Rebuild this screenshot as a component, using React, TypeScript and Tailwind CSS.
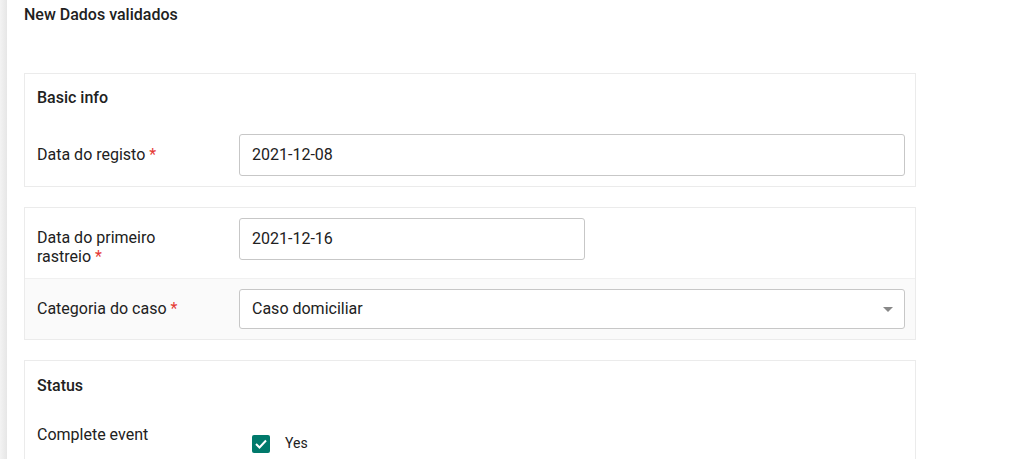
export default function App() {
  return (
    <div
      className="flex h-[459px] w-[1036px] overflow-hidden bg-white text-[#212121]"
      style={{ fontFamily: "Roboto, 'Liberation Sans', sans-serif" }}
    >
      <div className="w-[7px] shrink-0 bg-gradient-to-r from-[#f3f3f3] to-[#e6e6e6]" />
      <div className="flex-1 pl-[17px]">
        <h1 className="pt-[5px] text-[16px] font-medium leading-[20px]">New Dados validados</h1>

        <section className="mt-[48px] w-[892px] border border-[#ebebeb]">
          <h2 className="px-[12px] pt-[14px] text-[16px] font-medium leading-[20px]">Basic info</h2>
          <div className="flex items-center pl-[12px] pb-[10px] pt-[26px]">
            <label className="w-[202px] text-[16px]">
              Data do registo <span className="text-[#e53935]">*</span>
            </label>
            <div className="flex h-[42px] w-[666px] items-center rounded-[3px] border border-[#c7c7c7] px-[12px] text-[16px]">
              2021-12-08
            </div>
          </div>
        </section>

        <section className="mt-[20px] w-[892px] border border-[#ebebeb]">
          <div className="flex items-start border-b border-[#f0f0f0] px-[12px] pb-[12px] pt-[10px]">
            <label className="w-[202px] pt-[10px] text-[16px] leading-[19px]">
              Data do primeiro
              <br />
              rastreio <span className="text-[#e53935]">*</span>
            </label>
            <div className="flex h-[42px] w-[346px] items-center rounded-[3px] border border-[#c7c7c7] px-[12px] text-[16px]">
              2021-12-16
            </div>
          </div>
          <div className="flex items-center bg-[#fafafa] pl-[12px] py-[10px]">
            <label className="w-[202px] text-[16px]">
              Categoria do caso <span className="text-[#e53935]">*</span>
            </label>
            <div className="flex h-[40px] w-[666px] items-center justify-between rounded-[3px] border border-[#c7c7c7] bg-white pl-[12px] pr-[11px] text-[16px]">
              <span>Caso domiciliar</span>
              <svg width="10" height="5" viewBox="0 0 10 5">
                <path d="M0 0h10L5 5z" fill="#888" />
              </svg>
            </div>
          </div>
        </section>

        <section className="mt-[20px] w-[892px] border border-[#ebebeb] pb-[20px]">
          <h2 className="px-[12px] pt-[15px] text-[16px] font-medium leading-[20px]">Status</h2>
          <div className="flex items-start px-[12px] pt-[29px]">
            <label className="w-[202px] text-[16px] leading-[20px]">Complete event</label>
            <div className="flex items-center pl-[13px] pt-[8px]">
              <span className="flex h-[18px] w-[18px] items-center justify-center rounded-[2px] bg-[#00796b]">
                <svg width="12" height="10" viewBox="0 0 12 10">
                  <path d="M1 5l3.5 3.5L11 1.5" fill="none" stroke="#fff" strokeWidth="2" />
                </svg>
              </span>
              <span className="ml-[15px] text-[14px]">Yes</span>
            </div>
          </div>
        </section>
      </div>
    </div>
  );
}
